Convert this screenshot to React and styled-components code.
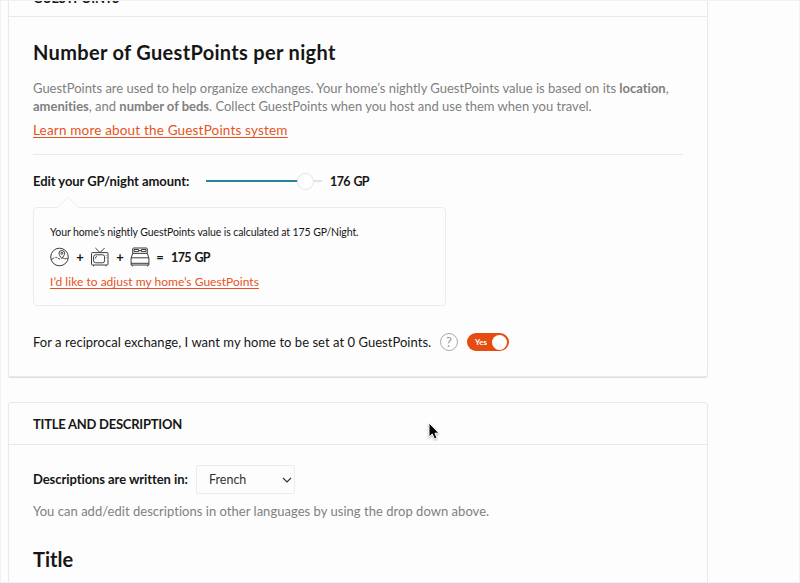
import React, { useState } from "react";
import styled, { createGlobalStyle } from "styled-components";

const MAX_POINTS = 191;

export default function App() {
  const [points, setPoints] = useState(176);
  const [reciprocal, setReciprocal] = useState(true);
  const [language, setLanguage] = useState("French");

  return (
    <Page>
      <GlobalStyle />
      <Card $first>
        <CardHeader $cut>
          <CardTitle $cut>GUESTPOINTS</CardTitle>
        </CardHeader>
        <GuestPointsBody>
          <H2>Number of GuestPoints per night</H2>
          <Intro>
            <Line>
              GuestPoints are used to help organize exchanges. Your home’s
              nightly GuestPoints value is based on its <b>location</b>,
            </Line>
            <Line>
              <b>amenities</b>, and <b>number of beds</b>. Collect GuestPoints
              when you host and use them when you travel.
            </Line>
          </Intro>
          <LearnMore href="#system">
            Learn more about the GuestPoints system
          </LearnMore>
          <AmountRow>
            <AmountLabel>Edit your GP/night amount:</AmountLabel>
            <Slider
              type="range"
              min="0"
              max={MAX_POINTS}
              value={points}
              onChange={(e) => setPoints(Number(e.target.value))}
              style={{ "--fill": `${(points / MAX_POINTS) * 92}%` }}
            />
            <Amount>{points} GP</Amount>
          </AmountRow>
          <Callout>
            <Arrow width="24" height="12" viewBox="0 0 24 12">
              <path d="M0 12 L1.5 11.5 L12 1 L22.5 11.5 L24 12" />
            </Arrow>
            <CalloutText>
              Your home’s nightly GuestPoints value is calculated at 175
              GP/Night.
            </CalloutText>
            <Formula>
              <MapIcon />
              <Sign>+</Sign>
              <TvIcon />
              <Sign>+</Sign>
              <BedIcon />
              <Sign>=</Sign>
              <Total>175 GP</Total>
            </Formula>
            <AdjustLink href="#adjust">
              I’d like to adjust my home’s GuestPoints
            </AdjustLink>
          </Callout>
          <ReciprocalRow>
            <ReciprocalText>
              For a reciprocal exchange, I want my home to be set at 0
              GuestPoints.
            </ReciprocalText>
            <Help>?</Help>
            <Toggle onClick={() => setReciprocal(!reciprocal)} $on={reciprocal}>
              <span>{reciprocal ? "Yes" : "No"}</span>
              <Knob />
            </Toggle>
          </ReciprocalRow>
        </GuestPointsBody>
      </Card>
      <Card>
        <CardHeader>
          <CardTitle>TITLE AND DESCRIPTION</CardTitle>
        </CardHeader>
        <DescriptionBody>
          <LanguageRow>
            <LanguageLabel>Descriptions are written in:</LanguageLabel>
            <SelectWrapper>
              <Select
                value={language}
                onChange={(e) => setLanguage(e.target.value)}
              >
                <option>French</option>
                <option>English</option>
              </Select>
              <Chevron width="10" height="6" viewBox="0 0 10 6">
                <path d="M1 1 L5 5 L9 1" />
              </Chevron>
            </SelectWrapper>
          </LanguageRow>
          <Hint>
            You can add/edit descriptions in other languages by using the drop
            down above.
          </Hint>
          <TitleHeading>Title</TitleHeading>
        </DescriptionBody>
      </Card>
      <Cursor width="13" height="19" viewBox="0 0 13 19">
        <path d="M1 1 V15 L4.3 12 L6.5 17 L9 16 L6.9 11.2 H11 Z" />
      </Cursor>
    </Page>
  );
}

function MapIcon() {
  return (
    <Icon width="20" height="20" viewBox="0 0 20 20">
      <circle cx="9.5" cy="10" r="8.8" />
      <path d="M11.8 11.6 C10.2 9.3 9 8 9 6.3 A2.8 2.8 0 0 1 14.6 6.3 C14.6 8 13.4 9.3 11.8 11.6 Z" />
      <circle cx="11.8" cy="6.3" r="1" />
      <path d="M1 12.8 C2.4 13 2.8 11 4.2 10.8" />
      <path d="M5.4 10.4 C7.6 10 8.2 12.2 10.6 12.2" strokeDasharray="2 1" />
      <path d="M12.8 11.4 C14.2 10.4 14.6 12.8 15.8 11.8 S17.1 12 18.1 11.4" />
    </Icon>
  );
}

function TvIcon() {
  return (
    <Icon width="20" height="20" viewBox="0 0 20 20">
      <path d="M5.4 1 L10 5.6 L14.6 1" />
      <rect x="1.5" y="5.6" width="16.5" height="12.4" rx="0.8" />
      <rect x="3.6" y="7.8" width="11" height="8" rx="2" />
      <path d="M5.6 11.5 V10.6 Q5.6 9.6 6.8 9.6" />
      <path d="M16.3 8.4 V8.9 M16.3 10.5 V11 M3.5 18 V19.3 M16 18 V19.3" />
    </Icon>
  );
}

function BedIcon() {
  return (
    <Icon width="20" height="20" viewBox="0 0 20 20">
      <path d="M2.7 6.4 V2 Q2.7 1 3.7 1 H16.3 Q17.3 1 17.3 2 V6.4" />
      <path d="M4 2.5 H8.6 V4.6 H4 Z M11.4 2.5 H16 V4.6 H11.4 Z M8.6 3.6 H11.4" />
      <path d="M2.7 6.4 H17.3 L18.9 11 V18 H1.1 V11 Z" />
      <path d="M1.1 10.8 H18.9 M1.1 16.3 H18.9" />
      <path d="M2.3 18 V19.4 M17.7 18 V19.4" />
    </Icon>
  );
}

const GlobalStyle = createGlobalStyle`
  * {
    box-sizing: border-box;
  }
  body {
    margin: 0;
    background-color: #fdfdfd;
    font-family: Lato, "Open Sans", sans-serif;
    color: #161616;
  }
`;
const Page = styled.div`
  position: relative;
  width: 800px;
  height: 583px;
  padding-left: 7px;
  border: 1px solid #f1f1f1;
  overflow: hidden;
`;
const Card = styled.section`
  width: 700px;
  height: ${(props) => (props.$first ? "376px" : "200px")};
  margin-bottom: 25px;
  border: 1px solid #e9e9e9;
  border-top-width: ${(props) => (props.$first ? "0" : "1px")};
  border-radius: ${(props) => (props.$first ? "0 0 3px 3px" : "3px 3px 0 0")};
  box-shadow: ${(props) => (props.$first ? "0 1px 1px #dcdcdc" : "none")};
`;
const CardHeader = styled.header`
  display: flex;
  align-items: ${(props) => (props.$cut ? "flex-start" : "center")};
  height: ${(props) => (props.$cut ? "16px" : "42px")};
  padding-left: 24px;
  border-bottom: 1px solid #e9e9e9;
`;
const CardTitle = styled.h3`
  margin: ${(props) => (props.$cut ? "-11px 0 0" : "0")};
  font-size: 13px;
  line-height: 16px;
  font-weight: 700;
  letter-spacing: -0.24px;
  white-space: nowrap;
`;
const GuestPointsBody = styled.div`
  padding: 20px 24px 0;
`;
const H2 = styled.h2`
  margin: 0 0 12px;
  font-size: 20px;
  line-height: 30px;
  font-weight: 700;
  letter-spacing: 0.32px;
`;
const Intro = styled.div`
  color: #808080;
  font-size: 13px;
  line-height: 18px;
`;
const Line = styled.p`
  margin: 0;
  white-space: nowrap;
  letter-spacing: -0.01px;
`;
const LearnMore = styled.a`
  display: block;
  width: fit-content;
  margin-top: 6px;
  color: #e5531d;
  font-size: 13.5px;
  line-height: 18px;
  letter-spacing: 0.18px;
  text-underline-offset: 2px;
`;
const AmountRow = styled.div`
  display: flex;
  align-items: center;
  height: 53px;
  margin-top: 15px;
  border-top: 1px solid #e9e9e9;
`;
const AmountLabel = styled.label`
  width: 173px;
  font-size: 13px;
  font-weight: 700;
  letter-spacing: -0.06px;
  white-space: nowrap;
`;
const Slider = styled.input`
  appearance: none;
  width: 116px;
  height: 18px;
  margin: 0 8px 0 0;
  background: linear-gradient(
      to right,
      #2684a0 var(--fill),
      #e2e2e2 var(--fill)
    )
    center / 100% 2px no-repeat;
  &::-webkit-slider-thumb {
    appearance: none;
    width: 17px;
    height: 17px;
    border: 1px solid #e4e4e4;
    border-radius: 50%;
    background: #fefefe;
  }
`;
const Amount = styled.strong`
  font-size: 12.5px;
  letter-spacing: -0.6px;
  word-spacing: 1px;
`;
const Callout = styled.div`
  position: relative;
  width: 413px;
  height: 99px;
  padding: 15px 16px 0;
  border: 1px solid #ececec;
  border-radius: 4px;
`;
const Arrow = styled.svg`
  position: absolute;
  left: 22px;
  top: -12px;
  fill: #fdfdfd;
  stroke: #ececec;
`;
const CalloutText = styled.p`
  margin: 0;
  font-size: 10.5px;
  line-height: 18px;
  letter-spacing: -0.1px;
  white-space: nowrap;
`;
const Formula = styled.div`
  display: flex;
  align-items: center;
  height: 20px;
  margin: 6px 0;
`;
const Icon = styled.svg`
  flex: none;
  fill: none;
  stroke: #3c3c3c;
  stroke-width: 1;
  stroke-linejoin: round;
`;
const Sign = styled.span`
  width: 20px;
  text-align: center;
  font-size: 13px;
  font-weight: 700;
`;
const Total = styled(Amount)`
  margin-left: 1px;
`;
const AdjustLink = styled.a`
  display: block;
  width: fit-content;
  color: #e5531d;
  font-size: 12px;
  line-height: 18px;
  letter-spacing: 0.03px;
  text-underline-offset: 2px;
`;
const ReciprocalRow = styled.div`
  display: flex;
  align-items: center;
  height: 20px;
  margin-top: 26px;
`;
const ReciprocalText = styled.span`
  width: 407px;
  font-size: 13px;
  line-height: 18px;
  letter-spacing: 0.04px;
  white-space: nowrap;
`;
const Help = styled.span`
  width: 18px;
  height: 18px;
  margin-right: 9px;
  border: 1px solid #aaa;
  border-radius: 50%;
  color: #999;
  font-size: 13px;
  line-height: 16px;
  text-align: center;
`;
const Toggle = styled.button`
  display: flex;
  align-items: center;
  justify-content: space-between;
  width: 42px;
  height: 18px;
  padding: 0 2px 0 8px;
  border: none;
  border-radius: 10px;
  background-color: ${(props) => (props.$on ? "#e44c12" : "#bbb")};
  color: white;
  font-family: inherit;
  font-size: 8px;
  font-weight: 700;
`;
const Knob = styled.i`
  width: 15px;
  height: 15px;
  border-radius: 50%;
  background-color: #fefefe;
`;
const DescriptionBody = styled.div`
  padding: 20px 24px 0;
`;
const LanguageRow = styled.div`
  display: flex;
  align-items: center;
  height: 29px;
`;
const LanguageLabel = styled.label`
  width: 163px;
  padding-bottom: 2px;
  font-size: 13px;
  font-weight: 700;
  letter-spacing: -0.07px;
  white-space: nowrap;
`;
const SelectWrapper = styled.div`
  position: relative;
  height: 29px;
`;
const Select = styled.select`
  appearance: none;
  width: 99px;
  height: 29px;
  padding: 0 12px;
  border: 1px solid #ececec;
  border-radius: 2px;
  background: transparent;
  color: #333;
  font-family: inherit;
  font-size: 12.5px;
`;
const Chevron = styled.svg`
  position: absolute;
  right: 3px;
  top: 12px;
  fill: none;
  stroke: #333;
  stroke-width: 1.2;
  pointer-events: none;
`;
const Hint = styled.p`
  margin: 8px 0 0;
  color: #808080;
  font-size: 13px;
  line-height: 18px;
  letter-spacing: 0.03px;
  white-space: nowrap;
`;
const TitleHeading = styled.h2`
  margin: 24px 0 0;
  font-size: 20px;
  line-height: 30px;
  font-weight: 700;
`;
const Cursor = styled.svg`
  position: absolute;
  left: 427px;
  top: 421px;
  fill: #000;
  stroke: #fff;
  filter: drop-shadow(0 1px 1px rgba(0, 0, 0, 0.3));
`;
